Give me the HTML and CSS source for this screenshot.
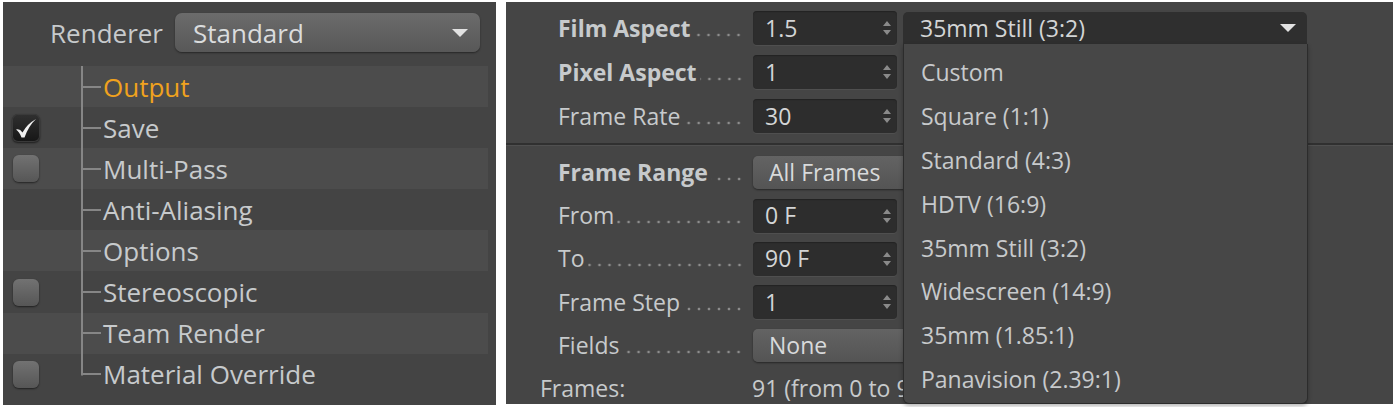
FILE: index.html
```html
<!DOCTYPE html>
<html>
<head>
<meta charset="utf-8">
<title>Render Settings</title>
<link rel="stylesheet" href="styles.css">
</head>
<body>
<div class="page">
  <section class="left">
    <div class="renderer">
      <span class="renderer-label">Renderer</span>
      <div class="select-light">
        <span>Standard</span>
        <svg class="caret" width="16" height="8" viewBox="0 0 16 8"><path d="M0 0H16L8 8Z"/></svg>
      </div>
    </div>
    <ul class="tree">
      <li class="row band"><span class="cbcell"></span><span class="branch"></span><span class="item active">Output</span></li>
      <li class="row"><span class="cbcell"><span class="cb on"><svg width="24" height="22" viewBox="0 0 24 22"><path d="M2 12.5 Q5.5 11 8.5 15.5 Q13 7 22 2 Q14.5 9 10.5 20.5 L7.5 20.5 Q5.5 15 2 12.5Z"/></svg></span></span><span class="branch"></span><span class="item">Save</span></li>
      <li class="row band"><span class="cbcell"><span class="cb"></span></span><span class="branch"></span><span class="item">Multi-Pass</span></li>
      <li class="row"><span class="cbcell"></span><span class="branch"></span><span class="item">Anti-Aliasing</span></li>
      <li class="row band"><span class="cbcell"></span><span class="branch"></span><span class="item">Options</span></li>
      <li class="row"><span class="cbcell"><span class="cb"></span></span><span class="branch"></span><span class="item">Stereoscopic</span></li>
      <li class="row band"><span class="cbcell"></span><span class="branch"></span><span class="item">Team Render</span></li>
      <li class="row"><span class="cbcell"><span class="cb"></span></span><span class="branch last"></span><span class="item">Material Override</span></li>
    </ul>
  </section>

  <section class="right">
    <div class="sec1">
      <div class="frow">
        <div class="flabel bold"><span>Film Aspect</span><span class="dots"></span></div>
        <div class="field"><span>1.5</span><svg class="spin" width="8" height="14" viewBox="0 0 8 14"><path d="M4 0L8 5H0Z M0 9H8L4 14Z"/></svg></div>
        <div class="dropwrap">
          <div class="select-dark">
            <span>35mm Still (3:2)</span>
            <svg class="caret" width="16" height="8" viewBox="0 0 16 8"><path d="M0 0H16L8 8Z"/></svg>
          </div>
          <ul class="menu">
            <li>Custom</li>
            <li>Square (1:1)</li>
            <li>Standard (4:3)</li>
            <li>HDTV (16:9)</li>
            <li>35mm Still (3:2)</li>
            <li>Widescreen (14:9)</li>
            <li>35mm (1.85:1)</li>
            <li>Panavision (2.39:1)</li>
          </ul>
        </div>
      </div>
      <div class="frow">
        <div class="flabel bold"><span>Pixel Aspect</span><span class="dots"></span></div>
        <div class="field"><span>1</span><svg class="spin" width="8" height="14" viewBox="0 0 8 14"><path d="M4 0L8 5H0Z M0 9H8L4 14Z"/></svg></div>
      </div>
      <div class="frow">
        <div class="flabel"><span>Frame Rate</span><span class="dots"></span></div>
        <div class="field"><span>30</span><svg class="spin" width="8" height="14" viewBox="0 0 8 14"><path d="M4 0L8 5H0Z M0 9H8L4 14Z"/></svg></div>
      </div>
    </div>
    <div class="sep"></div>
    <div class="sec2">
      <div class="frow">
        <div class="flabel bold"><span>Frame Range</span><span class="dots"></span></div>
        <div class="button">All Frames</div>
      </div>
      <div class="frow">
        <div class="flabel"><span>From</span><span class="dots"></span></div>
        <div class="field"><span>0 F</span><svg class="spin" width="8" height="14" viewBox="0 0 8 14"><path d="M4 0L8 5H0Z M0 9H8L4 14Z"/></svg></div>
      </div>
      <div class="frow">
        <div class="flabel"><span>To</span><span class="dots"></span></div>
        <div class="field"><span>90 F</span><svg class="spin" width="8" height="14" viewBox="0 0 8 14"><path d="M4 0L8 5H0Z M0 9H8L4 14Z"/></svg></div>
      </div>
      <div class="frow">
        <div class="flabel"><span>Frame Step</span><span class="dots"></span></div>
        <div class="field"><span>1</span><svg class="spin" width="8" height="14" viewBox="0 0 8 14"><path d="M4 0L8 5H0Z M0 9H8L4 14Z"/></svg></div>
      </div>
      <div class="frow">
        <div class="flabel"><span>Fields</span><span class="dots"></span></div>
        <div class="button">None</div>
      </div>
      <div class="frow">
        <div class="flabel plain">Frames:</div>
        <div class="value">91 (from 0 to 90)</div>
      </div>
    </div>
  </section>
</div>
</body>
</html>
```

FILE: styles.css
```css
* { box-sizing: border-box; margin: 0; padding: 0; }
html, body { background: #ffffff; }
body {
  font-family: "Open Sans", "Noto Sans", sans-serif;
  color: #c7cacc;
  overflow: hidden;
}
.page {
  display: flex;
  align-items: flex-start;
  gap: 10px;
  padding: 2px 0 0 3px;
  height: 407px;
}

/* ---------- left panel ---------- */
.left {
  width: 493px;
  height: 403px;
  background: #444444;
  flex: none;
}
.renderer {
  display: grid;
  grid-template-columns: 160px 305px;
  column-gap: 12px;
  align-items: center;
  height: 39px;
  margin: 11px 0 14px;
}
.renderer-label {
  text-align: right;
  font-size: 26px;
  line-height: 1;
}
.select-light {
  height: 39px;
  border-radius: 7px;
  background: linear-gradient(#6b6b6b, #585858);
  box-shadow: 0 1px 2px rgba(0,0,0,0.45);
  display: flex;
  align-items: center;
  justify-content: space-between;
  padding: 0 12px 0 18px;
  font-size: 26px;
  line-height: 1;
  color: #dadcdd;
}
.caret path { fill: #e2e2e2; }

.tree {
  list-style: none;
  margin-right: 8px;
}
.row {
  display: grid;
  grid-template-columns: 78px 22px 1fr;
  align-items: center;
  height: 41.1px;
}
.row.band { background: #4c4c4c; }
.cbcell {
  display: flex;
  align-items: center;
  padding-left: 10px;
}
.cb {
  width: 26px;
  height: 27px;
  border-radius: 6px;
  background: linear-gradient(#727272, #565656);
  box-shadow: 0 1px 2px rgba(0,0,0,0.55);
}
.cb.on {
  width: 28px;
  height: 28px;
  margin-left: -1px;
  background: linear-gradient(#303030, #161616);
  box-shadow: 0 1px 2px rgba(0,0,0,0.6), inset 0 0 0 1px #3a3a3a;
  display: flex;
  align-items: center;
  justify-content: center;
}
.cb.on path { fill: #f0f0f0; }
.branch {
  align-self: stretch;
  background:
    linear-gradient(#868686, #868686) left top / 2px 100% no-repeat,
    linear-gradient(#868686, #868686) left center / 20px 2px no-repeat;
}
.branch.last {
  background:
    linear-gradient(#868686, #868686) left top / 2px calc(50% + 1px) no-repeat,
    linear-gradient(#868686, #868686) left center / 20px 2px no-repeat;
}
.item {
  font-size: 26px;
  line-height: 1;
  white-space: nowrap;
}
.item.active { color: #f0a21e; }

/* ---------- right panel ---------- */
.right {
  width: 887px;
  height: 402px;
  background: #454545;
  flex: none;
  padding-top: 4px;
  font-size: 23px;
}
.sec1 { padding-left: 52px; }
.sec2 { padding: 5px 0 0 52px; }
.frow {
  display: grid;
  grid-template-columns: 189px 144px 404px;
  column-gap: 6px;
  align-items: center;
  height: 44px;
}
.sec2 .frow { height: 43.2px; }
.flabel {
  display: flex;
  align-items: baseline;
  padding-right: 3px;
  line-height: 1;
  white-space: nowrap;
}
.flabel.bold { font-weight: 700; }
.flabel.plain { margin-left: -18px; }
.dots {
  flex: 1;
  height: 4px;
  margin-left: 3px;
  background: radial-gradient(circle at center, #8d8d8d 1.1px, transparent 1.7px) right center / 10px 4px repeat-x;
}
.field {
  height: 34px;
  border-radius: 4px;
  background: #2d2d2d;
  box-shadow: inset 0 1px 1px #232323, 0 1px 0 #4f4f4f;
  display: flex;
  align-items: center;
  justify-content: space-between;
  padding: 0 6px 0 12px;
  line-height: 1;
  color: #d3d5d6;
}
.spin path { fill: #8a8a8a; }
.button {
  grid-column: 2 / 4;
  width: 160px;
  height: 33px;
  border-radius: 5px;
  background: linear-gradient(#636363, #545454);
  box-shadow: 0 1px 2px rgba(0,0,0,0.45);
  display: flex;
  align-items: center;
  padding-left: 16px;
  line-height: 1;
  color: #d8dadb;
}
.value {
  grid-column: 2 / 4;
  line-height: 1;
  white-space: nowrap;
  margin-left: -1px;
}
.sep {
  margin-top: 5px;
  height: 3px;
  border-top: 2px solid #303030;
  border-bottom: 1px solid #505050;
}

.dropwrap {
  position: relative;
  z-index: 2;
}
.select-dark {
  height: 32px;
  border-radius: 5px 5px 0 0;
  background: #2f2f2f;
  display: flex;
  align-items: center;
  justify-content: space-between;
  padding: 0 11px 0 17px;
  line-height: 1;
  color: #d3d5d6;
}
.menu {
  position: absolute;
  left: 0;
  top: 100%;
  width: 405px;
  height: 360px;
  list-style: none;
  background: #474747;
  border: 1px solid #2c2c2c;
  border-top: none;
  border-radius: 0 0 6px 6px;
  box-shadow: 0 2px 4px rgba(0,0,0,0.3);
  padding-top: 7px;
}
.menu li {
  height: 43.8px;
  display: flex;
  align-items: center;
  padding-left: 17px;
  line-height: 1;
  white-space: nowrap;
}
```
